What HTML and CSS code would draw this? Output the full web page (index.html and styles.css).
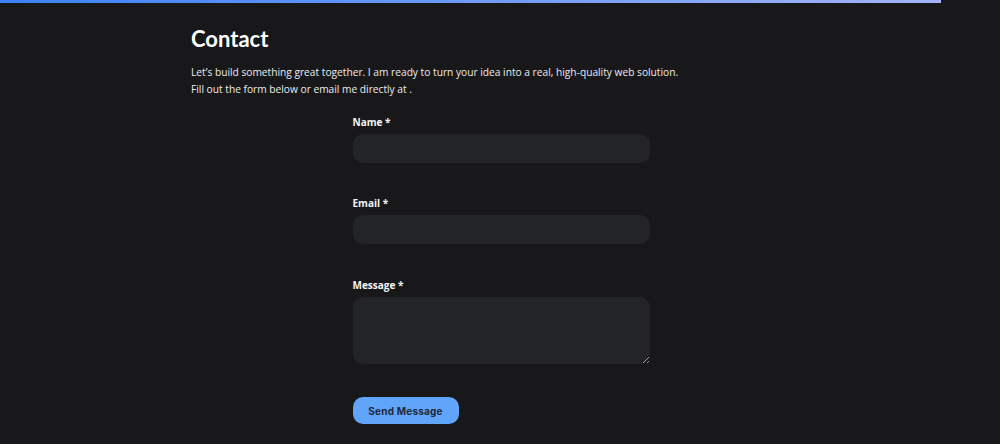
FILE: index.html
```html
<!DOCTYPE html>
<html lang="en">
<head>
<meta charset="utf-8">
<title>Contact</title>
<link rel="stylesheet" href="styles.css">
</head>
<body>
<div class="progress"></div>
<main class="section">
  <h1 class="title">Contact</h1>
  <p class="intro">Let’s build something great together. I am ready to turn your idea into a real, high-quality web solution.<br>Fill out the form below or email me directly at .</p>
  <form class="form">
    <div class="field">
      <label class="label" for="name">Name *</label>
      <input class="input" id="name" type="text">
    </div>
    <div class="field">
      <label class="label" for="email">Email *</label>
      <input class="input" id="email" type="email">
    </div>
    <div class="field field-message">
      <label class="label" for="msg">Message *</label>
      <textarea class="input textarea" id="msg"></textarea>
    </div>
    <button class="btn" type="button">Send Message</button>
  </form>
</main>
</body>
</html>
```
FILE: styles.css
```css
html, body {
  margin: 0;
  padding: 0;
  background: #18181b;
  height: 100%;
  overflow: hidden;
}
body {
  font-family: "Open Sans", "Noto Sans", sans-serif;
  color: #f4f4f5;
}
.progress {
  width: 941px;
  height: 3px;
  background: linear-gradient(90deg, #3b82f6 0%, #6f9af5 50%, #a5b4fc 100%);
}
.section {
  width: 618px;
  margin: 0 auto;
  padding-top: 22px;
}
.title {
  margin: 0;
  font-family: Lato, "Open Sans", sans-serif;
  font-size: 22px;
  line-height: 28px;
  font-weight: 700;
  color: #ffffff;
}
.intro {
  margin: 11px 0 0;
  font-size: 10.2px;
  line-height: 17px;
  color: #ececee;
}
.form {
  width: 297px;
  margin: 17px auto 0;
  display: flex;
  flex-direction: column;
  gap: 33px;
  position: relative;
  left: 1px;
}
.field {
  display: flex;
  flex-direction: column;
  gap: 5px;
}
.field-message {
  margin-top: 1px;
}
.label {
  font-size: 10px;
  line-height: 14px;
  font-weight: 700;
  color: #f4f4f5;
}
.input {
  box-sizing: border-box;
  width: 100%;
  height: 29px;
  border: none;
  border-radius: 10px;
  background: #232428;
  color: #fff;
  outline: none;
  font: inherit;
}
.textarea {
  height: 67px;
  resize: vertical;
}
.btn {
  align-self: flex-start;
  margin-top: 0;
  width: 106px;
  height: 27px;
  border: none;
  border-radius: 10px;
  background: #60a5fa;
  color: #1e293b;
  font-family: Inter, "Liberation Sans", sans-serif;
  font-size: 10px;
  font-weight: 700;
  letter-spacing: 0.2px;
}
```
